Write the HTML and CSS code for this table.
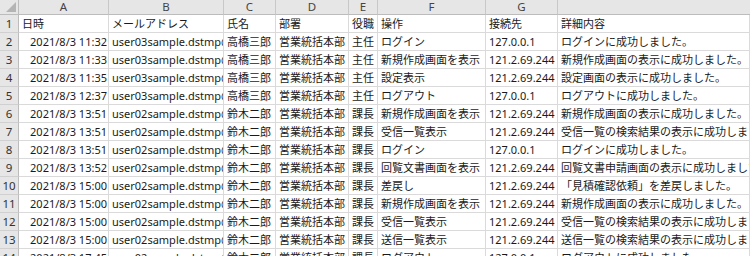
FILE: index.html
```html
<!DOCTYPE html>
<html lang="ja">
<head>
<meta charset="utf-8">
<link rel="stylesheet" href="styles.css">
</head>
<body>
<div class="sheet">
  <div class="corner"><span class="tri"></span></div>
  <div class="ch">A</div><div class="ch">B</div><div class="ch">C</div><div class="ch">D</div><div class="ch">E</div><div class="ch">F</div><div class="ch">G</div><div class="ch last"></div>

  <div class="rh">1</div><div class="c">日時</div><div class="c">メールアドレス</div><div class="c">氏名</div><div class="c">部署</div><div class="c">役職</div><div class="c">操作</div><div class="c">接続先</div><div class="c">詳細内容</div>

  <div class="rh">2</div><div class="c r">2021/8/3 11:32</div><div class="c">user03sample.dstmp@example.jp</div><div class="c">高橋三郎</div><div class="c">営業統括本部</div><div class="c">主任</div><div class="c">ログイン</div><div class="c">127.0.0.1</div><div class="c">ログインに成功しました。</div>

  <div class="rh">3</div><div class="c r">2021/8/3 11:33</div><div class="c">user03sample.dstmp@example.jp</div><div class="c">高橋三郎</div><div class="c">営業統括本部</div><div class="c">主任</div><div class="c">新規作成画面を表示</div><div class="c">121.2.69.244</div><div class="c">新規作成画面の表示に成功しました。</div>

  <div class="rh">4</div><div class="c r">2021/8/3 11:35</div><div class="c">user03sample.dstmp@example.jp</div><div class="c">高橋三郎</div><div class="c">営業統括本部</div><div class="c">主任</div><div class="c">設定表示</div><div class="c">121.2.69.244</div><div class="c">設定画面の表示に成功しました。</div>

  <div class="rh">5</div><div class="c r">2021/8/3 12:37</div><div class="c">user03sample.dstmp@example.jp</div><div class="c">高橋三郎</div><div class="c">営業統括本部</div><div class="c">主任</div><div class="c">ログアウト</div><div class="c">127.0.0.1</div><div class="c">ログアウトに成功しました。</div>

  <div class="rh">6</div><div class="c r">2021/8/3 13:51</div><div class="c">user02sample.dstmp@example.jp</div><div class="c">鈴木二郎</div><div class="c">営業統括本部</div><div class="c">課長</div><div class="c">新規作成画面を表示</div><div class="c">121.2.69.244</div><div class="c">新規作成画面の表示に成功しました。</div>

  <div class="rh">7</div><div class="c r">2021/8/3 13:51</div><div class="c">user02sample.dstmp@example.jp</div><div class="c">鈴木二郎</div><div class="c">営業統括本部</div><div class="c">課長</div><div class="c">受信一覧表示</div><div class="c">121.2.69.244</div><div class="c">受信一覧の検索結果の表示に成功しました。</div>

  <div class="rh">8</div><div class="c r">2021/8/3 13:51</div><div class="c">user02sample.dstmp@example.jp</div><div class="c">鈴木二郎</div><div class="c">営業統括本部</div><div class="c">課長</div><div class="c">ログイン</div><div class="c">127.0.0.1</div><div class="c">ログインに成功しました。</div>

  <div class="rh">9</div><div class="c r">2021/8/3 13:52</div><div class="c">user02sample.dstmp@example.jp</div><div class="c">鈴木二郎</div><div class="c">営業統括本部</div><div class="c">課長</div><div class="c">回覧文書画面を表示</div><div class="c">121.2.69.244</div><div class="c">回覧文書申請画面の表示に成功しました。</div>

  <div class="rh">10</div><div class="c r">2021/8/3 15:00</div><div class="c">user02sample.dstmp@example.jp</div><div class="c">鈴木二郎</div><div class="c">営業統括本部</div><div class="c">課長</div><div class="c">差戻し</div><div class="c">121.2.69.244</div><div class="c">「見積確認依頼」を差戻しました。</div>

  <div class="rh">11</div><div class="c r">2021/8/3 15:00</div><div class="c">user02sample.dstmp@example.jp</div><div class="c">鈴木二郎</div><div class="c">営業統括本部</div><div class="c">課長</div><div class="c">新規作成画面を表示</div><div class="c">121.2.69.244</div><div class="c">新規作成画面の表示に成功しました。</div>

  <div class="rh">12</div><div class="c r">2021/8/3 15:00</div><div class="c">user02sample.dstmp@example.jp</div><div class="c">鈴木二郎</div><div class="c">営業統括本部</div><div class="c">課長</div><div class="c">受信一覧表示</div><div class="c">121.2.69.244</div><div class="c">受信一覧の検索結果の表示に成功しました。</div>

  <div class="rh">13</div><div class="c r">2021/8/3 15:00</div><div class="c">user02sample.dstmp@example.jp</div><div class="c">鈴木二郎</div><div class="c">営業統括本部</div><div class="c">課長</div><div class="c">送信一覧表示</div><div class="c">121.2.69.244</div><div class="c">送信一覧の検索結果の表示に成功しました。</div>

  <div class="rh">14</div><div class="c r">2021/8/3 17:45</div><div class="c">user02sample.dstmp@example.jp</div><div class="c">鈴木二郎</div><div class="c">営業統括本部</div><div class="c">課長</div><div class="c">ログアウト</div><div class="c">127.0.0.1</div><div class="c">ログアウトに成功しました。</div>
</div>
</body>
</html>
```

FILE: styles.css
```css
html, body {
  margin: 0;
  padding: 0;
  background: #ffffff;
}
body {
  width: 750px;
  height: 256px;
  overflow: hidden;
}
.sheet {
  display: grid;
  grid-template-columns: 19px 90px 115px 52px 73px 29px 108px 72px 1fr;
  grid-template-rows: 15px;
  grid-auto-rows: 18px;
  font-family: "Noto Sans", "Noto Sans CJK JP", sans-serif;
  font-size: 11px;
  color: #1a1a1a;
}
.corner {
  background: #e6e6e6;
  border-right: 1px solid #bcbcbc;
  border-bottom: 1px solid #bcbcbc;
  box-sizing: border-box;
  display: flex;
  align-items: flex-end;
  justify-content: flex-end;
  padding: 0 2px 2px 0;
}
.tri {
  width: 0;
  height: 0;
  border-left: 10px solid transparent;
  border-bottom: 10px solid #b4b4b4;
}
.ch {
  background: #e6e6e6;
  border-right: 1px solid #c8c8c8;
  border-bottom: 1px solid #bcbcbc;
  box-sizing: border-box;
  display: flex;
  align-items: center;
  justify-content: center;
  font-family: "Noto Sans", "Liberation Sans", sans-serif;
  font-size: 11.5px;
  color: #444444;
  line-height: 1;
}
.ch.last {
  border-right: none;
}
.rh {
  background: #e6e6e6;
  border-right: 1px solid #bcbcbc;
  border-bottom: 1px solid #d0d0d0;
  box-sizing: border-box;
  display: flex;
  align-items: center;
  justify-content: center;
  font-family: "Noto Sans", "Liberation Sans", sans-serif;
  font-size: 11.5px;
  color: #333333;
  line-height: 1;
}
.c {
  border-right: 1px solid #dadada;
  border-bottom: 1px solid #dadada;
  box-sizing: border-box;
  display: flex;
  align-items: center;
  padding: 0 2px 0 3px;
  white-space: nowrap;
  overflow: hidden;
  line-height: 1;
}
.c.r {
  justify-content: flex-end;
  padding: 0 1px 0 2px;
}
```
